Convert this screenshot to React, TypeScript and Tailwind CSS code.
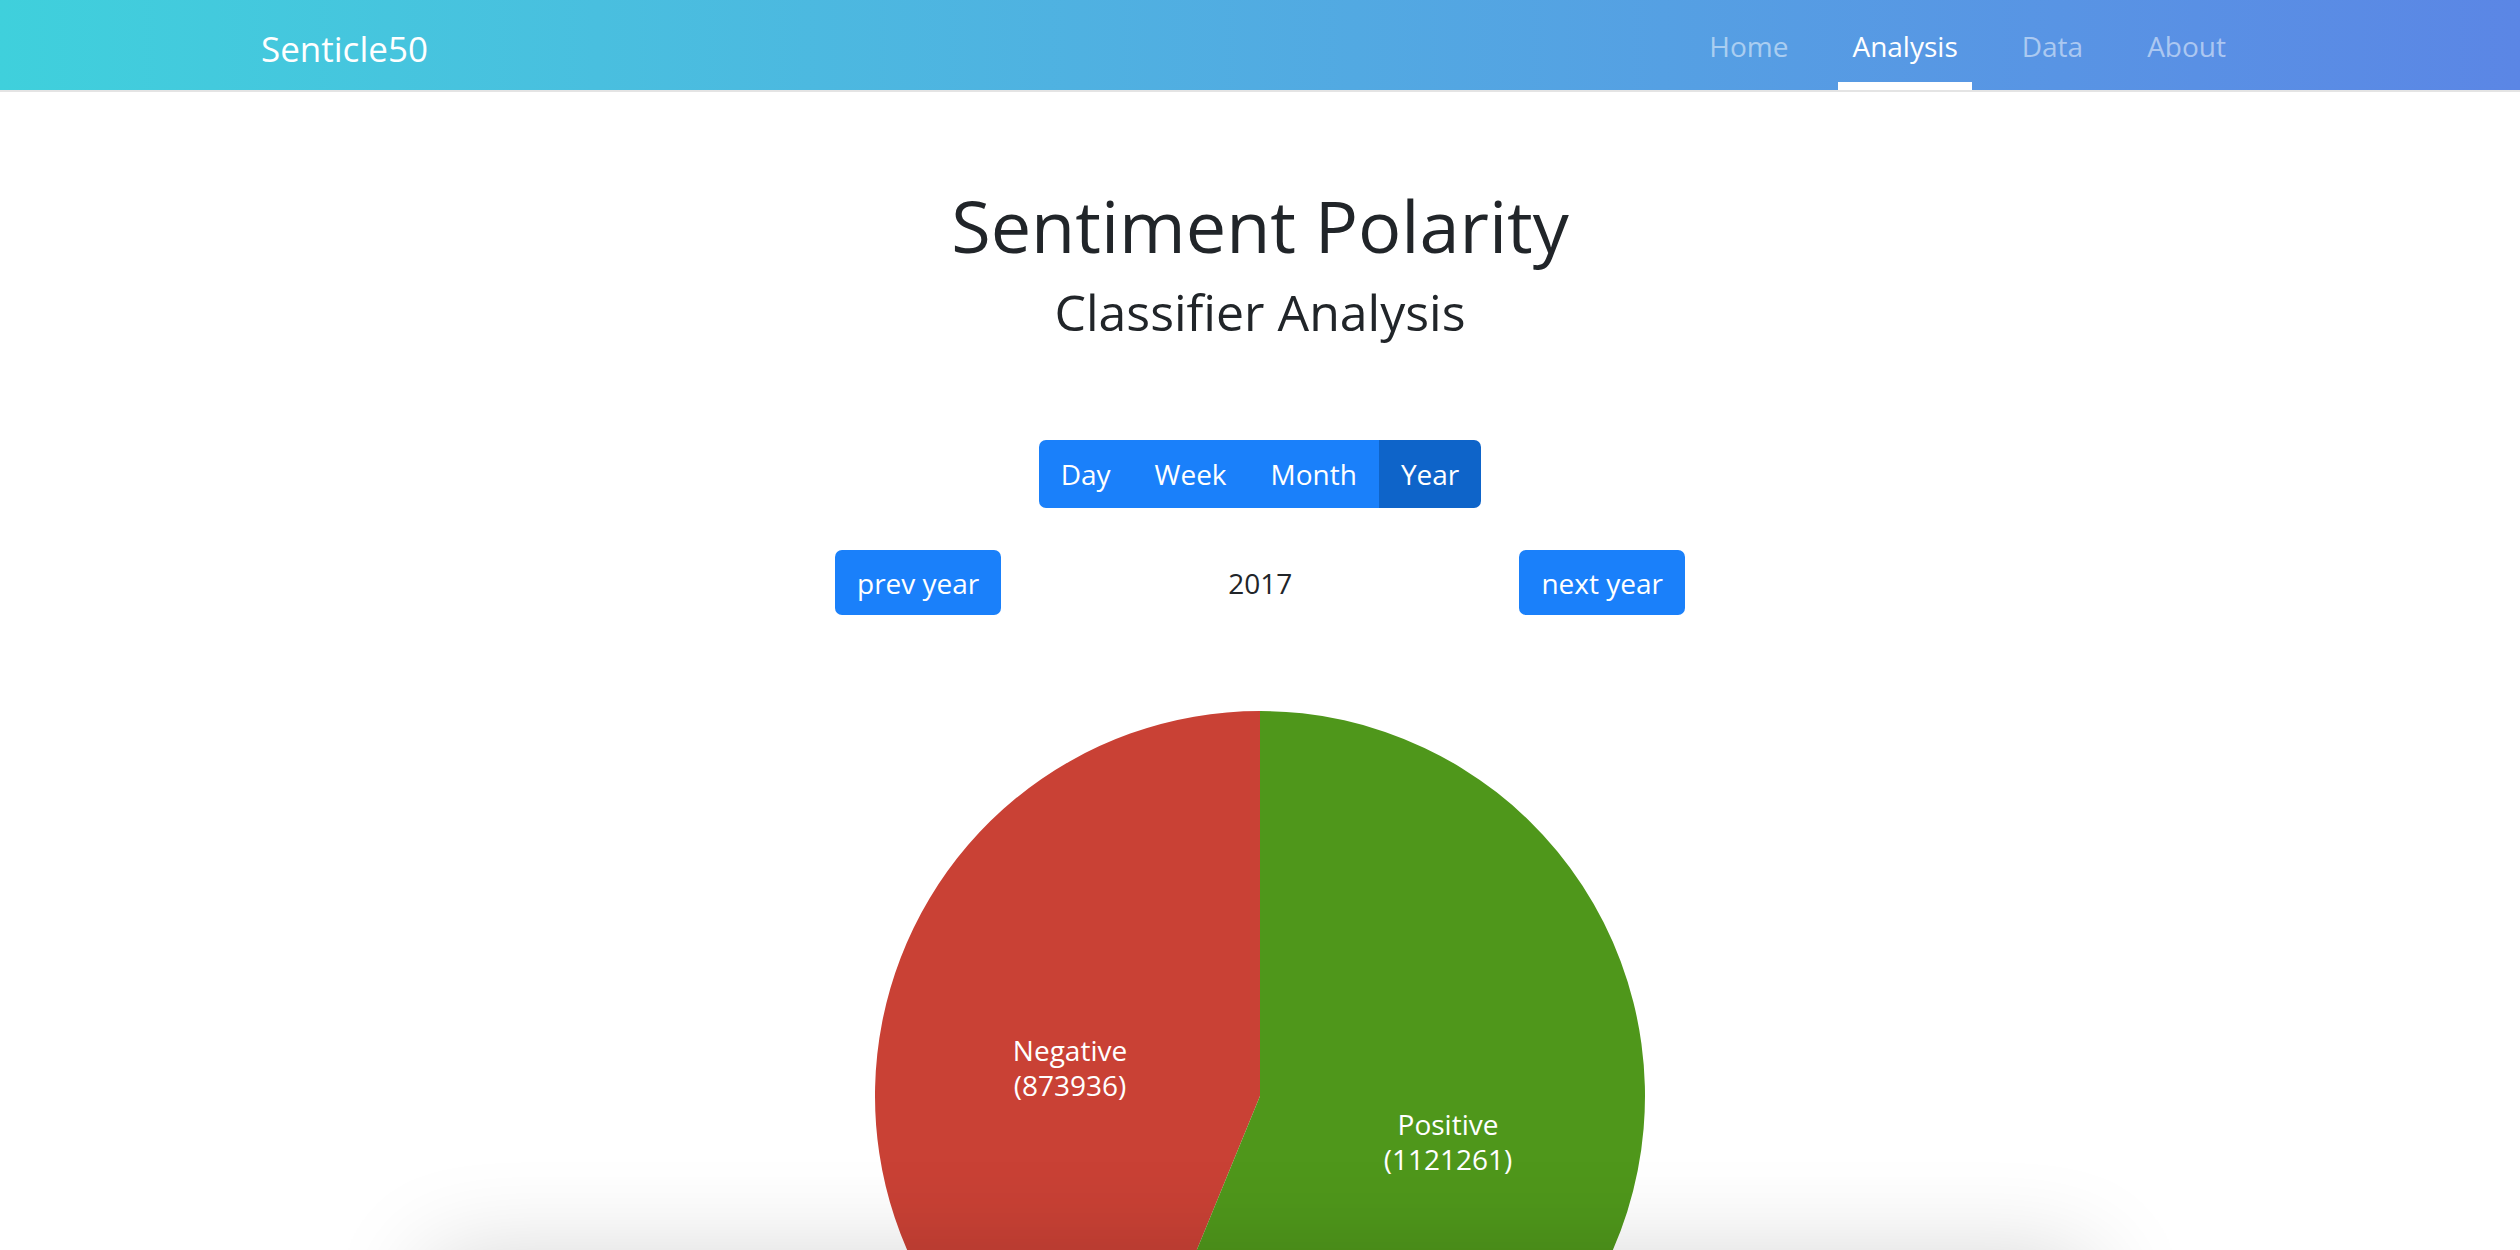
import React from "react";

const FONT = { fontFamily: '"Open Sans", "Noto Sans", sans-serif' };

function Pie() {
  const neg = 873936;
  const pos = 1121261;
  const r = 385;
  const c = 385;
  const frac = pos / (neg + pos);
  const ang = frac * 2 * Math.PI;
  const ex = c + r * Math.sin(ang);
  const ey = c - r * Math.cos(ang);
  const green = `M${c},${c} L${c},0 A${r},${r} 0 ${frac > 0.5 ? 1 : 0} 1 ${ex},${ey} Z`;
  const red = `M${c},${c} L${ex},${ey} A${r},${r} 0 ${frac > 0.5 ? 0 : 1} 1 ${c},0 Z`;
  return (
    <svg width="770" height="770" viewBox="0 0 770 770" className="block mx-auto">
      <path d={red} fill="#c94135" />
      <path d={green} fill="#4f971b" />
      <g fill="#ffffff" fontSize="28" textAnchor="middle" style={FONT}>
        <text x="195" y="350">Negative</text>
        <text x="195" y="385">(873936)</text>
        <text x="573" y="424">Positive</text>
        <text x="573" y="459">(1121261)</text>
      </g>
    </svg>
  );
}

export default function App() {
  const links = [
    { label: "Home", active: false },
    { label: "Analysis", active: true },
    { label: "Data", active: false },
    { label: "About", active: false },
  ];
  return (
    <div className="relative w-full h-[1250px] overflow-hidden bg-white text-[#212529]" style={FONT}>
      <nav className="h-[92px] border-b-2 border-[#e4e4e4] bg-gradient-to-r from-[#3fd0dc] to-[#5b86e5] flex items-stretch justify-between pl-[261px] pr-[280px]">
        <div className="flex items-center pt-[8px] text-[35px] text-white">Senticle50</div>
        <div className="flex items-stretch gap-[36px]">
          {links.map((l) => (
            <div
              key={l.label}
              className={
                "flex items-center px-[14px] pt-[10px] border-b-[8px] text-[28px] " +
                (l.active ? "border-white text-white" : "border-transparent text-white/50")
              }
            >
              {l.label}
            </div>
          ))}
        </div>
      </nav>

      <div className="flex flex-col items-center">
        <h1 className="mt-[90px] text-[72px] leading-[86px] font-normal">Sentiment Polarity</h1>
        <h3 className="mt-[14px] text-[50px] leading-[60px] font-normal">Classifier Analysis</h3>

        <div className="mt-[98px] inline-flex rounded-[7px] overflow-hidden h-[68px] text-[28px] text-white">
          <div className="flex items-center px-[22px] bg-[#1a80fa]">Day</div>
          <div className="flex items-center px-[22px] bg-[#1a80fa]">Week</div>
          <div className="flex items-center px-[22px] bg-[#1a80fa]">Month</div>
          <div className="flex items-center px-[22px] bg-[#0e64c9]">Year</div>
        </div>

        <div className="mt-[42px] w-[850px] flex items-center justify-between text-[28px]">
          <div className="h-[65px] px-[22px] flex items-center rounded-[7px] bg-[#1a80fa] text-white">prev year</div>
          <div>2017</div>
          <div className="h-[65px] px-[22px] flex items-center rounded-[7px] bg-[#1a80fa] text-white">next year</div>
        </div>

        <div className="mt-[96px] w-full">
          <Pie />
        </div>
      </div>

      <div className="absolute left-[430px] top-[1259px] w-[1660px] h-[300px] bg-white shadow-[0_0_100px_rgba(0,0,0,0.18)]" />
    </div>
  );
}
